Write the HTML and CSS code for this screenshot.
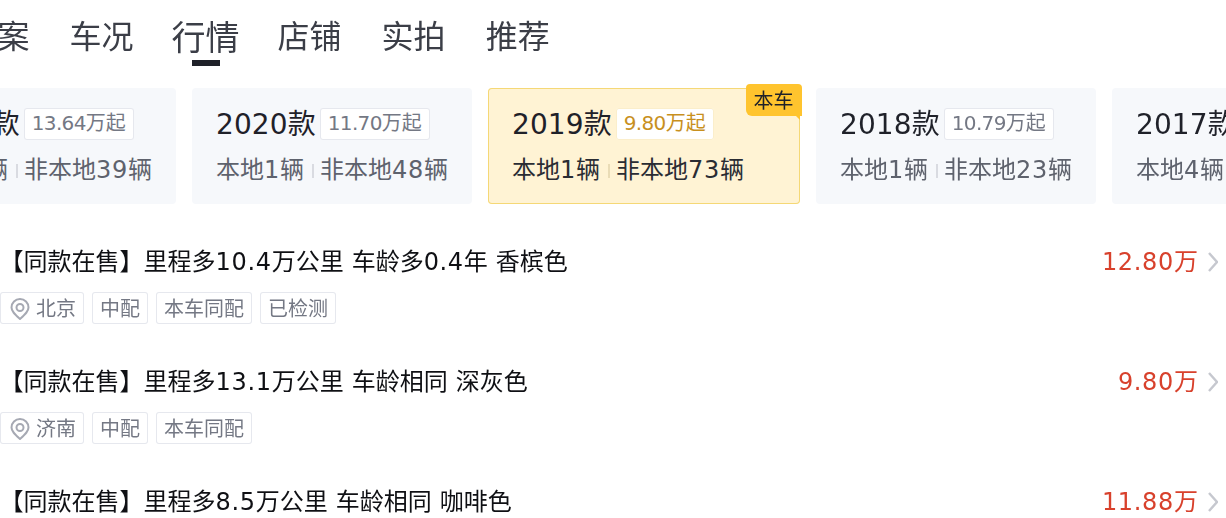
FILE: index.html
```html
<!DOCTYPE html>
<html lang="zh-CN">
<head>
    <meta charset="UTF-8">
    <title>行情</title>
    <link rel="stylesheet" href="styles.css">
</head>
<body>
<div class="page">
    <div class="tabs">
        <span class="tab">档案</span>
        <span class="tab">车况</span>
        <span class="tab active">行情</span>
        <span class="tab">店铺</span>
        <span class="tab">实拍</span>
        <span class="tab">推荐</span>
    </div>

    <div class="years">
        <div class="year">
            <div class="year-top"><span class="year-name">2021款</span><span class="from"><span class="num">13.64</span>万起</span></div>
            <div class="year-count"><span>本地<span class="num">2</span>辆</span><i class="sep"></i><span>非本地<span class="num">39</span>辆</span></div>
        </div>
        <div class="year">
            <div class="year-top"><span class="year-name">2020款</span><span class="from"><span class="num">11.70</span>万起</span></div>
            <div class="year-count"><span>本地<span class="num">1</span>辆</span><i class="sep"></i><span>非本地<span class="num">48</span>辆</span></div>
        </div>
        <div class="year current">
            <span class="badge">本车</span>
            <div class="year-top"><span class="year-name">2019款</span><span class="from"><span class="num">9.80</span>万起</span></div>
            <div class="year-count"><span>本地<span class="num">1</span>辆</span><i class="sep"></i><span>非本地<span class="num">73</span>辆</span></div>
        </div>
        <div class="year">
            <div class="year-top"><span class="year-name">2018款</span><span class="from"><span class="num">10.79</span>万起</span></div>
            <div class="year-count"><span>本地<span class="num">1</span>辆</span><i class="sep"></i><span>非本地<span class="num">23</span>辆</span></div>
        </div>
        <div class="year">
            <div class="year-top"><span class="year-name">2017款</span><span class="from"><span class="num">9.20</span>万起</span></div>
            <div class="year-count"><span>本地<span class="num">4</span>辆</span><i class="sep"></i><span>非本地<span class="num">31</span>辆</span></div>
        </div>
    </div>

    <div class="list">
        <div class="item">
            <div class="item-head">
                <span class="item-title">【同款在售】里程多<span class="num">10.4</span>万公里 车龄多<span class="num">0.4</span>年 香槟色</span>
                <span class="price"><span><span class="num">12.80</span>万</span><svg class="arrow" viewBox="0 0 10 20"><path d="M1 1 9 10 1 19"/></svg></span>
            </div>
            <div class="tags">
                <span class="tag"><svg class="pin" viewBox="0 0 20 22"><path d="M10 21C5 16.500 1.500 13.500 1.500 9.500a8.500 8.500 0 0 1 17 0c0 4-3.500 7-8.500 11.500z"/><circle cx="10" cy="9.500" r="3.500"/></svg>北京</span>
                <span class="tag">中配</span>
                <span class="tag">本车同配</span>
                <span class="tag">已检测</span>
            </div>
        </div>
        <div class="item">
            <div class="item-head">
                <span class="item-title">【同款在售】里程多<span class="num">13.1</span>万公里 车龄相同 深灰色</span>
                <span class="price"><span><span class="num">9.80</span>万</span><svg class="arrow" viewBox="0 0 10 20"><path d="M1 1 9 10 1 19"/></svg></span>
            </div>
            <div class="tags">
                <span class="tag"><svg class="pin" viewBox="0 0 20 22"><path d="M10 21C5 16.500 1.500 13.500 1.500 9.500a8.500 8.500 0 0 1 17 0c0 4-3.500 7-8.500 11.500z"/><circle cx="10" cy="9.500" r="3.500"/></svg>济南</span>
                <span class="tag">中配</span>
                <span class="tag">本车同配</span>
            </div>
        </div>
        <div class="item">
            <div class="item-head">
                <span class="item-title">【同款在售】里程多<span class="num">8.5</span>万公里 车龄相同 咖啡色</span>
                <span class="price"><span><span class="num">11.88</span>万</span><svg class="arrow" viewBox="0 0 10 20"><path d="M1 1 9 10 1 19"/></svg></span>
            </div>
        </div>
    </div>
</div>
</body>
</html>
```

FILE: styles.css
```css
html, body {
    height: 100%;
    overflow: hidden;
}

body {
    margin: 0;
    background-color: white;
    font-family: "DejaVu Sans", "Noto Sans CJK SC", sans-serif;
    color: #1f2129;
}

/* mobile page, drawn at 2x */
.page {
    width: 613px;
    height: 259px;
    overflow: hidden;
    transform: scale(2);
    transform-origin: 0 0;
}

.num {
    letter-spacing: 0.33px;
}

.tabs {
    display: flex;
    gap: 20px;
    height: 44px;
    margin-left: -17.25px;
    padding-top: 7px;
    box-sizing: border-box;
}

.tab {
    position: relative;
    height: 24px;
    font-size: 16px;
    line-height: 24px;
    color: #3b3e47;
    white-space: nowrap;
}

.tab.active {
    margin: 0 -1px;
    font-size: 17px;
}

.tab.active::after {
    content: "";
    position: absolute;
    left: 10.25px;
    top: 23px;
    width: 14px;
    height: 2.5px;
    background-color: #1f2129;
}

.years {
    display: flex;
    gap: 8px;
    margin-left: -52px;
    width: 800px;
}

.year {
    position: relative;
    box-sizing: border-box;
    flex: none;
    width: 140px;
    height: 58px;
    padding: 10px 12px 0;
    background-color: #f6f8fb;
    border-radius: 2px;
}

.year.current {
    width: 156px;
    background-color: #fff3d4;
    box-shadow: inset 0 0 0 0.5px #f5d876;
}

.year-top {
    display: flex;
    align-items: center;
    height: 16px;
}

.year-name {
    font-size: 14px;
    line-height: 16px;
    letter-spacing: 0.05px;
}

.from {
    margin-left: 2px;
    padding: 0 4px;
    height: 16px;
    line-height: 16px;
    font-size: 10px;
    color: #747884;
    background-color: white;
    border-radius: 1.5px;
    box-shadow: inset 0 0 0 0.5px #e6e8ee;
}

.from .num {
    letter-spacing: -0.33px;
}

.current .from {
    color: #c8901e;
    box-shadow: inset 0 0 0 0.5px #fbeecb;
}

.year-count {
    display: flex;
    align-items: center;
    margin-top: 7px;
    height: 16px;
    font-size: 12px;
    color: #5e626d;
    white-space: nowrap;
}

.year-count span {
    padding-bottom: 2.5px;
}

.year-count .num {
    padding-bottom: 0;
}

.current .year-count {
    color: #2a2c33;
}

.sep {
    width: 0.5px;
    height: 7px;
    margin: 0 3.75px;
    background-color: #d9dbe1;
}

.current .sep {
    background-color: #eadcb6;
}

.badge {
    position: absolute;
    top: -2px;
    right: -0.5px;
    width: 27.5px;
    height: 16px;
    line-height: 17px;
    text-align: center;
    font-size: 10px;
    color: #1f2129;
    background-color: #ffc42e;
    border-radius: 2px 2px 0 3px;
}

.badge::after {
    content: "";
    position: absolute;
    right: 0.5px;
    top: 16px;
    border-top: 2px solid #ffc42e;
    border-left: 2px solid transparent;
}

.list {
    margin-top: 20px;
}

.item {
    height: 60px;
}

.item-head {
    display: flex;
    justify-content: space-between;
    align-items: center;
    height: 18px;
}

.item-title {
    padding-bottom: 3px;
    margin-left: -0.25px;
    font-size: 12px;
    color: #0f1014;
    white-space: nowrap;
    word-spacing: 0.19px;
}

.price {
    display: flex;
    align-items: center;
    padding-bottom: 3px;
    font-size: 12px;
    color: #d8412c;
}

.arrow {
    width: 5px;
    height: 10px;
    margin: 3px 4px 0 5px;
    fill: none;
    stroke: #c6c8cf;
    stroke-width: 2.4;
}

.tags {
    display: flex;
    gap: 4px;
    margin-top: 6px;
}

.tag {
    box-sizing: border-box;
    display: flex;
    align-items: center;
    height: 16px;
    padding: 0 4px 2px;
    font-size: 10px;
    color: #747884;
    border-radius: 1.5px;
    box-shadow: inset 0 0 0 0.5px #e6e8ee;
}

.pin {
    width: 10px;
    height: 11px;
    margin: 3px 3px 0 1px;
    fill: none;
    stroke: #a6a9b3;
    stroke-width: 2;
}
```
